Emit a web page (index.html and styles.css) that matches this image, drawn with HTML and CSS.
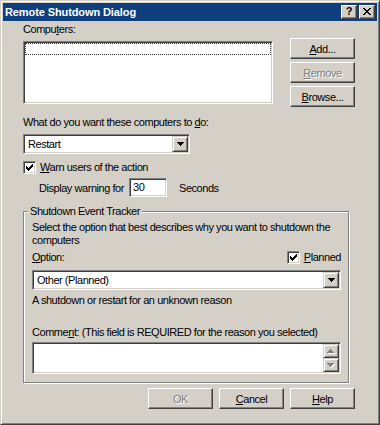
FILE: index.html
```html
<!DOCTYPE html>
<html lang="en">
<head>
  <meta charset="UTF-8" />
  <title>Remote Shutdown Dialog</title>
  <link rel="stylesheet" href="styles.css">
</head>
<body>
  <div class="window">
    <div class="titlebar">
      <span class="title">Remote Shutdown Dialog</span>
      <div class="caption-btns">
        <span class="cap-btn">?</span>
        <span class="cap-btn">
          <svg width="8" height="7" shape-rendering="crispEdges"><path d="M0 0h2v1H0z M6 0h2v1H6z M1 1h2v1H1z M5 1h2v1H5z M2 2h4v1H2z M3 3h2v1H3z M2 4h4v1H2z M1 5h2v1H1z M5 5h2v1H5z M0 6h2v1H0z M6 6h2v1H6z" fill="#000"/></svg>
        </span>
      </div>
    </div>

    <div class="content">
      <div class="label first">Compu<u>t</u>ers:</div>
      <div class="computers-row">
        <div class="listbox"><div class="focus-row"></div></div>
        <div class="side-buttons">
          <button class="btn"><u>A</u>dd...</button>
          <button class="btn disabled"><u>R</u>emove</button>
          <button class="btn"><u>B</u>rowse...</button>
        </div>
      </div>

      <div class="label what">What do you want these computers to <u>d</u>o:</div>
      <div class="combo restart">
        <span class="combo-text">Restart</span>
        <span class="drop-btn"><svg width="7" height="4" shape-rendering="crispEdges"><path d="M0 0h7v1H0z M1 1h5v1H1z M2 2h3v1H2z M3 3h1v1H3z" fill="#000"/></svg></span>
      </div>

      <div class="check-row warn">
        <span class="checkbox"><svg width="7" height="7" shape-rendering="crispEdges"><path d="M6 0h1v1h-1z M5 1h2v1h-2z M0 2h1v1H0z M4 2h3v1H4z M0 3h2v1H0z M3 3h3v1H3z M0 4h5v1H0z M1 5h3v1H1z M2 6h1v1H2z" fill="#000"/></svg></span>
        <span><u>W</u>arn users of the action</span>
      </div>
      <div class="delay-row">
        <span class="delay-label">Display warning for</span>
        <span class="edit">30</span>
        <span>Seconds</span>
      </div>

      <fieldset class="group">
        <legend>Shutdown Event Tracker</legend>
        <p class="text first-text">Select the option that best describes why you want to shutdown the<br>computers</p>
        <div class="option-row">
          <span><u>O</u>ption:</span>
          <span class="check-row">
            <span class="checkbox"><svg width="7" height="7" shape-rendering="crispEdges"><path d="M6 0h1v1h-1z M5 1h2v1h-2z M0 2h1v1H0z M4 2h3v1H4z M0 3h2v1H0z M3 3h3v1H3z M0 4h5v1H0z M1 5h3v1H1z M2 6h1v1H2z" fill="#000"/></svg></span>
            <span><u>P</u>lanned</span>
          </span>
        </div>
        <div class="combo reason">
          <span class="combo-text">Other (Planned)</span>
          <span class="drop-btn"><svg width="7" height="4" shape-rendering="crispEdges"><path d="M0 0h7v1H0z M1 1h5v1H1z M2 2h3v1H2z M3 3h1v1H3z" fill="#000"/></svg></span>
        </div>
        <p class="text reason-text">A shutdown or restart for an unknown reason</p>
        <div class="label comment-label">Comme<u>n</u>t: (This field is REQUIRED for the reason you selected)</div>
        <div class="memo">
          <div class="memo-text"></div>
          <div class="scroll">
            <span class="scroll-btn"><svg width="8" height="5" shape-rendering="crispEdges"><path d="M4 1h1v1H4z M3 2h3v1H3z M2 3h5v1H2z M1 4h7v1H1z" fill="#fff"/><path d="M3 0h1v1H3z M2 1h3v1H2z M1 2h5v1H1z M0 3h7v1H0z" fill="#808080"/></svg></span>
            <span class="scroll-btn"><svg width="8" height="5" shape-rendering="crispEdges"><path d="M1 1h7v1H1z M2 2h5v1H2z M3 3h3v1H3z M4 4h1v1H4z" fill="#fff"/><path d="M0 0h7v1H0z M1 1h5v1H1z M2 2h3v1H2z M3 3h1v1H3z" fill="#808080"/></svg></span>
          </div>
        </div>
      </fieldset>

      <div class="footer">
        <button class="btn disabled">OK</button>
        <button class="btn"><u>C</u>ancel</button>
        <button class="btn"><u>H</u>elp</button>
      </div>
    </div>
  </div>
</body>
</html>
```

FILE: styles.css
```css
* {
  box-sizing: border-box;
}
body {
  margin: 0;
  background: #d4d0c8;
}
.window {
  width: 380px;
  height: 425px;
  background: #d4d0c8;
  border: 1px solid;
  border-color: #d4d0c8 #404040 #404040 #d4d0c8;
  box-shadow: inset 1px 1px #fff, inset -1px -1px #808080;
  padding: 2px;
  font-family: "Liberation Sans", Arial, sans-serif;
  font-size: 11px;
  letter-spacing: -0.45px;
  color: #000;
}
u {
  text-decoration-thickness: 1px;
  text-underline-offset: 1px;
}
.titlebar {
  height: 18px;
  background: #0e3e7e;
  display: flex;
  align-items: center;
  justify-content: space-between;
  padding: 0 2px;
  color: #fff;
  font-weight: bold;
  letter-spacing: -0.1px;
}
.caption-btns {
  display: flex;
  gap: 2px;
}
.cap-btn {
  width: 16px;
  height: 14px;
  background: #d4d0c8;
  border: 1px solid;
  border-color: #fff #404040 #404040 #fff;
  box-shadow: inset -1px -1px #808080;
  display: flex;
  align-items: center;
  justify-content: center;
  color: #000;
  font-size: 11px;
  line-height: 1;
  padding-bottom: 1px;
}
.content {
  padding: 2px 22px 0 20px;
}
.label, .text {
  line-height: 13px;
  margin: 0;
}
.computers-row {
  display: flex;
  justify-content: space-between;
  margin-top: 2px;
}
.listbox {
  width: 250px;
  height: 63px;
  margin-top: 3px;
  background: #fff;
  border: 1px solid;
  border-color: #808080 #fff #fff #808080;
  box-shadow: inset 1px 1px #404040, inset -1px -1px #d4d0c8;
  padding: 1px;
}
.focus-row {
  height: 12px;
  border: 1px dotted #404040;
}
.side-buttons {
  display: flex;
  flex-direction: column;
  gap: 3px;
}
.btn {
  width: 65px;
  height: 21px;
  padding: 0;
  font: inherit;
  letter-spacing: inherit;
  color: #000;
  background: #d4d0c8;
  border: 1px solid;
  border-color: #fff #404040 #404040 #fff;
  box-shadow: inset -1px -1px #808080;
}
.btn.disabled {
  color: #808080;
  text-shadow: 1px 1px #fff;
}
.what {
  margin-top: 9px;
}
.combo {
  display: flex;
  align-items: center;
  height: 20px;
  margin-top: 5px;
  background: #fff;
  border: 1px solid;
  border-color: #808080 #fff #fff #808080;
  box-shadow: inset 1px 1px #404040, inset -1px -1px #d4d0c8;
  padding: 1px;
}
.combo.restart {
  width: 167px;
}
.combo-text {
  flex: 1;
  padding-left: 3px;
}
.drop-btn {
  width: 16px;
  height: 16px;
  background: #d4d0c8;
  border: 1px solid;
  border-color: #d4d0c8 #404040 #404040 #d4d0c8;
  box-shadow: inset 1px 1px #fff, inset -1px -1px #808080;
  display: flex;
  align-items: center;
  justify-content: center;
}
.check-row {
  display: flex;
  align-items: center;
  gap: 4px;
  line-height: 13px;
}
.warn {
  margin-top: 7px;
}
.checkbox {
  width: 13px;
  height: 13px;
  background: #fff;
  border: 1px solid;
  border-color: #808080 #fff #fff #808080;
  box-shadow: inset 1px 1px #404040, inset -1px -1px #d4d0c8;
  display: flex;
  align-items: center;
  justify-content: center;
}
.delay-row {
  display: flex;
  align-items: center;
  margin-top: 4px;
  padding-left: 16px;
}
.delay-label {
  width: 90px;
}
.edit {
  width: 38px;
  height: 19px;
  margin-right: 12px;
  background: #fff;
  border: 1px solid;
  border-color: #808080 #fff #fff #808080;
  box-shadow: inset 1px 1px #404040, inset -1px -1px #d4d0c8;
  padding: 2px 3px;
  line-height: 13px;
}
.group {
  width: 326px;
  margin: 8px 0 0 0;
  padding: 0 7px 8px 8px;
  border: 1px solid #808080;
  box-shadow: 1px 1px #fff, inset 1px 1px #fff;
  min-inline-size: 0;
}
.group legend {
  padding: 0 2px;
  margin-left: -4px;
  line-height: 13px;
  background: #d4d0c8;
}
.first-text {
  margin-top: 3px;
}
.option-row {
  display: flex;
  justify-content: space-between;
  align-items: center;
  margin-top: 4px;
  line-height: 13px;
}
.combo.reason {
  margin-top: 6px;
}
.reason-text {
  margin-top: 4px;
}
.comment-label {
  margin-top: 19px;
}
.memo {
  display: flex;
  height: 32px;
  margin-top: 3px;
  background: #fff;
  border: 1px solid;
  border-color: #808080 #fff #fff #808080;
  box-shadow: inset 1px 1px #404040, inset -1px -1px #d4d0c8;
  padding: 1px;
}
.memo-text {
  flex: 1;
}
.scroll {
  display: flex;
  flex-direction: column;
}
.scroll-btn {
  width: 16px;
  height: 14px;
  background: #d4d0c8;
  border: 1px solid;
  border-color: #d4d0c8 #404040 #404040 #d4d0c8;
  box-shadow: inset 1px 1px #fff, inset -1px -1px #808080;
  display: flex;
  align-items: center;
  justify-content: center;
}
.footer {
  display: flex;
  justify-content: flex-end;
  gap: 6px;
  margin-top: 5px;
}
```
